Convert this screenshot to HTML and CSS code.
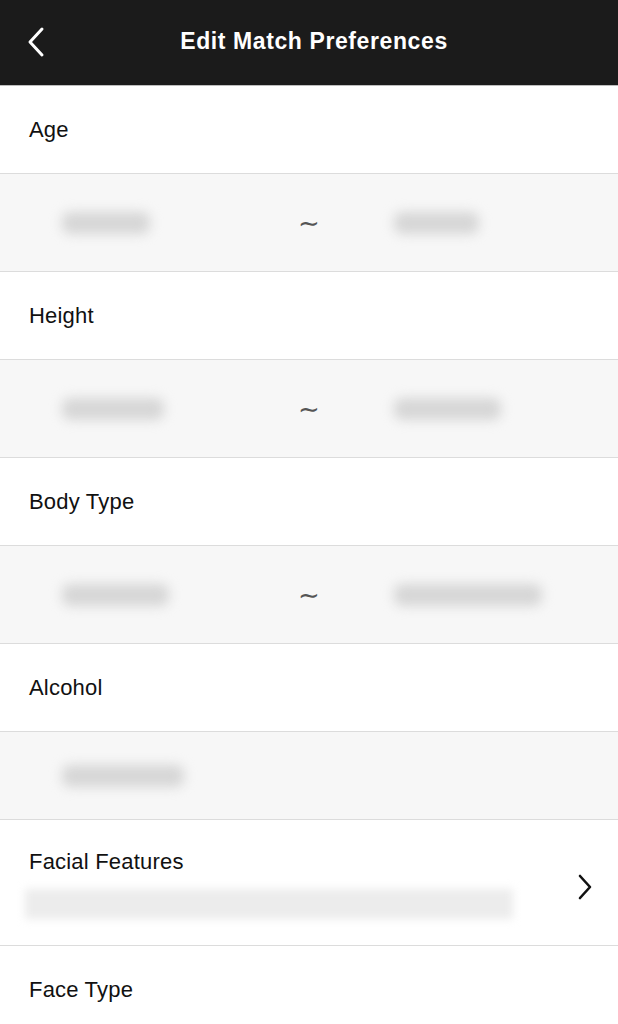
FILE: index.html
```html
<!DOCTYPE html>
<html>
<head>
<meta charset="utf-8">
<link rel="stylesheet" href="styles.css">
</head>
<body>
<div class="app">
  <header class="topbar">
    <svg class="back" width="20" height="32" viewBox="0 0 20 32"><path d="M16 3 L4 16 L16 29" fill="none" stroke="#fff" stroke-width="3" stroke-linecap="round" stroke-linejoin="round"/></svg>
    <h1 class="title">Edit Match Preferences</h1>
  </header>
  <main class="list">
    <div class="label-row">Age</div>
    <div class="value-row range">
      <div class="slot"><span class="blob w90"></span></div>
      <span class="tilde">∼</span>
      <div class="slot"><span class="blob w85"></span></div>
    </div>
    <div class="label-row">Height</div>
    <div class="value-row range">
      <div class="slot"><span class="blob w100"></span></div>
      <span class="tilde">∼</span>
      <div class="slot"><span class="blob w105"></span></div>
    </div>
    <div class="label-row">Body Type</div>
    <div class="value-row range">
      <div class="slot"><span class="blob w105"></span></div>
      <span class="tilde">∼</span>
      <div class="slot"><span class="blob w148"></span></div>
    </div>
    <div class="label-row">Alcohol</div>
    <div class="value-row single">
      <div class="slot"><span class="blob w120"></span></div>
    </div>
    <div class="nav-row">
      <div class="nav-text">
        <div class="nav-label">Facial Features</div>
        <span class="band"></span>
      </div>
      <svg class="chev" width="18" height="28" viewBox="0 0 18 28"><path d="M4 3 L14 14 L4 25" fill="none" stroke="#111" stroke-width="2.6" stroke-linecap="round" stroke-linejoin="round"/></svg>
    </div>
    <div class="label-row last">Face Type</div>
  </main>
</div>
</body>
</html>
```
FILE: styles.css
```css
* { box-sizing: border-box; }
html, body { margin: 0; padding: 0; background: #fff; }
body { font-family: "Liberation Sans", Arial, sans-serif; color: #111; overflow: hidden; }
.app { width: 618px; height: 1024px; overflow: hidden; }
.topbar {
  height: 86px;
  background: #1b1b1b;
  border-bottom: 1px solid #bdbdbd;
  display: flex;
  align-items: center;
  position: relative;
}
.back { position: absolute; left: 26px; top: 26px; }
.title {
  margin: 0;
  width: 100%;
  text-align: center;
  color: #fff;
  font-size: 23px;
  font-weight: bold;
  letter-spacing: 0.6px;
  padding-left: 10px;
  padding-bottom: 2px;
}
.list { display: flex; flex-direction: column; }
.label-row {
  height: 88px;
  display: flex;
  align-items: center;
  padding-left: 29px;
  font-size: 22px;
  letter-spacing: 0.2px;
  background: #fff;
  border-bottom: 1px solid #dcdcdc;
}
.label-row.last { border-bottom: none; }
.value-row {
  background: #f7f7f7;
  border-bottom: 1px solid #dcdcdc;
  display: flex;
  align-items: center;
}
.value-row.range { height: 98px; }
.value-row.single { height: 88px; }
.slot { width: 298px; padding-left: 62px; display: flex; align-items: center; }
.value-row.range .slot:last-child { width: auto; padding-left: 73px; }
.tilde { width: 24px; text-align: center; font-family: "DejaVu Sans", sans-serif; font-size: 26px; color: #555; line-height: 1; margin-left: -1px; }
.blob {
  display: block;
  height: 22px;
  background: #d6d6d6;
  border-radius: 8px;
  filter: blur(6px);
}
.w85 { width: 85px; }
.w90 { width: 88px; }
.w100 { width: 102px; }
.w105 { width: 107px; }
.w120 { width: 122px; }
.w148 { width: 148px; }
.nav-row {
  height: 126px;
  background: #fff;
  border-bottom: 1px solid #dcdcdc;
  display: flex;
  align-items: center;
  padding-left: 25px;
  padding-right: 24px;
}
.nav-text { flex: 1; display: flex; flex-direction: column; padding-top: 2px; }
.nav-label { font-size: 22px; letter-spacing: 0.2px; padding-left: 4px; margin-bottom: 14px; }
.band {
  display: block;
  width: 488px;
  height: 30px;
  background: #ececec;
  filter: blur(4px);
}
.chev { margin-top: 8px; }
```
